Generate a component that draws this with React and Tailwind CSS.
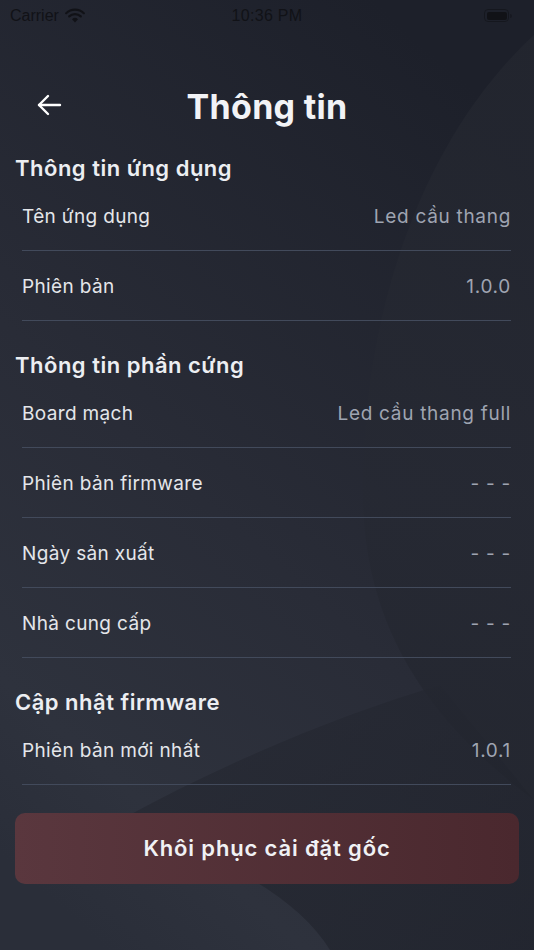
import React from "react";

const font = { fontFamily: "Inter, 'Noto Sans', 'Liberation Sans', sans-serif" };

function Row({ label, value }) {
  return (
    <div className="mx-[22px] mr-[23px] h-[70px] flex items-center justify-between border-b border-[#424a5b] pt-[3px]">
      <span className="text-[19px] text-[#e4e6ea] tracking-[0.35px]">{label}</span>
      <span className="text-[19px] text-[#9fa4b1] tracking-[0.7px]">{value}</span>
    </div>
  );
}

function Header({ children, className = "" }) {
  return (
    <div className={"h-[28px] flex items-center pl-[15px] pt-[3px] text-[22px] font-semibold text-[#eceef2] tracking-[0.5px] " + className}>
      {children}
    </div>
  );
}

function Background() {
  return (
    <svg className="absolute inset-0 w-full h-full" viewBox="0 0 534 950" preserveAspectRatio="none">
      <defs>
        <linearGradient id="bg" x1="0.7" y1="0" x2="0.2" y2="1">
          <stop offset="0" stopColor="#1d202a" />
          <stop offset="0.55" stopColor="#292c37" />
          <stop offset="0.85" stopColor="#2e323d" />
          <stop offset="1" stopColor="#2a2e39" />
        </linearGradient>
        <linearGradient id="circ" x1="0" y1="0" x2="0" y2="1">
          <stop offset="0" stopColor="#23262f" />
          <stop offset="0.6" stopColor="#262933" />
          <stop offset="1" stopColor="#23262f" />
        </linearGradient>
        <linearGradient id="low" x1="0" y1="0" x2="1" y2="1">
          <stop offset="0" stopColor="#272a34" />
          <stop offset="1" stopColor="#1f222b" />
        </linearGradient>
      </defs>
      <rect width="534" height="950" fill="url(#bg)" />
      <path d="M534 35 C 420 140 360 320 363 500 C 366 640 440 730 534 800 Z" fill="url(#circ)" opacity="0.85" />
      <path d="M440 685 L 534 800 L 534 950 L 330 950 C 300 900 230 860 120 820 C 230 760 340 715 440 685 Z" fill="url(#low)" opacity="0.7" />
    </svg>
  );
}

export default function App() {
  return (
    <div className="relative w-[534px] h-[950px] overflow-hidden bg-[#262a34]" style={font}>
      <Background />
      <div className="relative flex flex-col">
        {/* status bar */}
        <div className="h-[30px] flex items-center justify-between px-[10px] pt-[1px] text-[#111217]" style={{ fontFamily: "'Liberation Sans', Arial, sans-serif" }}>
          <div className="flex items-center gap-[6px] w-[120px]">
            <span className="text-[16px]">Carrier</span>
            <svg width="20" height="15" viewBox="0 0 20 15">
              <path d="M10 14.5 L7 11.2 A4.5 4.5 0 0 1 13 11.2 Z" fill="#111217" />
              <path d="M4.2 8.4 A8.3 8.3 0 0 1 15.8 8.4" stroke="#111217" strokeWidth="2.2" fill="none" strokeLinecap="round" />
              <path d="M1.2 5.2 A12.6 12.6 0 0 1 18.8 5.2" stroke="#111217" strokeWidth="2.2" fill="none" strokeLinecap="round" />
            </svg>
          </div>
          <span className="text-[16px] font-medium tracking-[0.3px]">10:36 PM</span>
          <div className="w-[120px] flex justify-end pr-[12px]">
            <div className="flex items-center">
              <div className="w-[25px] h-[13px] rounded-[4px] border border-[#111217]/60 p-[1.5px]">
                <div className="w-full h-full rounded-[2px] bg-[#111217]" />
              </div>
              <div className="w-[1.5px] h-[4px] bg-[#111217]/50 rounded-r ml-[1px]" />
            </div>
          </div>
        </div>

        {/* nav */}
        <div className="mt-[51px] h-[50px] relative flex items-center justify-center">
          <div className="absolute left-[36px] top-[12px]">
            <svg width="26" height="24" viewBox="0 0 26 24" fill="none" stroke="#ffffff" strokeWidth="2.4" strokeLinecap="round" strokeLinejoin="round">
              <path d="M24 12 H3" />
              <path d="M12 3 L3 12 L12 21" />
            </svg>
          </div>
          <span className="text-[34px] font-bold text-[#f2f3f6] tracking-[0.3px]">Thông tin</span>
        </div>

        <Header className="mt-[22px]">Thông tin ứng dụng</Header>
        <Row label="Tên ứng dụng" value="Led cầu thang" />
        <Row label="Phiên bản" value="1.0.0" />

        <Header className="mt-[29px]">Thông tin phần cứng</Header>
        <Row label="Board mạch" value="Led cầu thang full" />
        <Row label="Phiên bản firmware" value="- - -" />
        <Row label="Ngày sản xuất" value="- - -" />
        <Row label="Nhà cung cấp" value="- - -" />

        <Header className="mt-[29px]">Cập nhật firmware</Header>
        <Row label="Phiên bản mới nhất" value="1.0.1" />

        <div className="mt-[28px] mx-[15px] w-[504px] h-[71px] rounded-[10px] bg-gradient-to-r from-[#5a373e] to-[#4a282e] flex items-center justify-center">
          <span className="text-[22px] font-semibold text-[#f0f1f4] tracking-[0.85px]">Khôi phục cài đặt gốc</span>
        </div>
      </div>
    </div>
  );
}
